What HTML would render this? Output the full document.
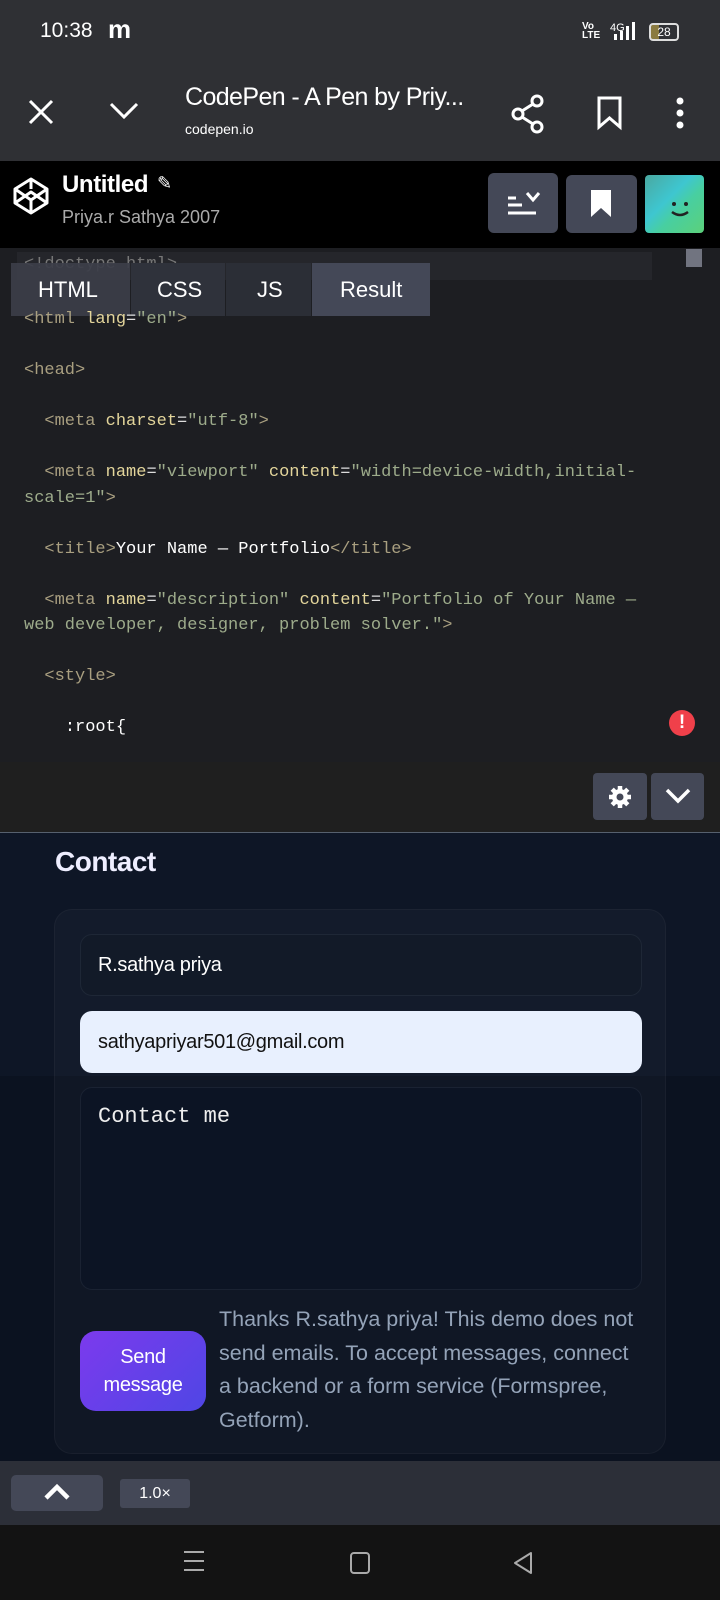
<!DOCTYPE html>
<html><head><meta charset="utf-8"><style>
*{margin:0;padding:0;box-sizing:border-box}
body{width:720px;height:1600px;overflow:hidden;background:#0b1220;font-family:"Liberation Sans",sans-serif;position:relative;color:#fff}
.a{position:absolute}
.mono{font-family:"Liberation Mono",monospace;font-size:17px;white-space:pre;color:#ddd}
.t{color:#a99f80}.n{color:#e3d59b}.v{color:#9dab8b}.w{color:#fff}
.btn{position:absolute;background:#444857;border-radius:4px}
</style></head><body>
<div class="a" style="left:0;top:0;width:720px;height:161px;background:#2f3034"></div>
<div class="a" style="left:40px;top:19px;font-size:21px">10:38</div>
<div class="a" style="left:108px;top:14px;font-size:26px;font-weight:bold">m</div>
<div class="a" style="left:582px;top:22px;font-size:10px;line-height:9px;font-weight:bold">Vo<br>LTE</div>
<div class="a" style="left:610px;top:22px;font-size:11px">4G</div>
<svg class="a" style="left:612px;top:20px" width="30" height="22"><rect x="2" y="14" width="3" height="6" fill="#fff"/><rect x="8" y="11" width="3" height="9" fill="#fff"/><rect x="14" y="6" width="3" height="14" fill="#fff"/><rect x="20" y="2" width="3" height="18" fill="#fff"/></svg>
<div class="a" style="left:649px;top:23px;width:30px;height:18px;border:2px solid #ddd;border-radius:4px;font-size:12px;text-align:center;line-height:14px;background:linear-gradient(90deg,#8a7a40 30%,transparent 30%)">28</div>
<svg class="a" style="left:26px;top:97px" width="30" height="30"><path d="M4 4L26 26M26 4L4 26" stroke="#fff" stroke-width="3"/></svg>
<svg class="a" style="left:108px;top:100px" width="32" height="22"><path d="M3 4L16 17L29 4" stroke="#fff" stroke-width="3" fill="none"/></svg>
<div class="a" style="left:185px;top:83px;font-size:25px;letter-spacing:-0.6px">CodePen - A Pen by Priy...</div>
<div class="a" style="left:185px;top:121px;font-size:14px">codepen.io</div>
<svg class="a" style="left:510px;top:94px" width="36" height="40"><circle cx="27" cy="7" r="5" stroke="#fff" stroke-width="3" fill="none"/><circle cx="8" cy="20" r="5" stroke="#fff" stroke-width="3" fill="none"/><circle cx="27" cy="33" r="5" stroke="#fff" stroke-width="3" fill="none"/><path d="M12 17L23 10M12 23L23 30" stroke="#fff" stroke-width="3"/></svg>
<svg class="a" style="left:596px;top:95px" width="28" height="36"><path d="M3 3H24V32L13.5 23L3 32Z" stroke="#fff" stroke-width="3" fill="none"/></svg>
<svg class="a" style="left:674px;top:96px" width="12" height="34"><circle cx="6" cy="5" r="3.5" fill="#fff"/><circle cx="6" cy="17" r="3.5" fill="#fff"/><circle cx="6" cy="29" r="3.5" fill="#fff"/></svg>
<div class="a" style="left:0;top:161px;width:720px;height:87px;background:#000"></div>
<svg class="a" style="left:12px;top:176px" width="38" height="40" viewBox="0 0 38 40"><g stroke="#fff" stroke-width="3" fill="none" stroke-linejoin="round"><path d="M19 3L35 13V27L19 37L3 27V13Z"/><path d="M19 3V13M3 13L19 24L35 13M19 37V24M3 27L19 16L35 27"/></g></svg>
<div class="a" style="left:62px;top:171px;font-size:24px;font-weight:bold;letter-spacing:-0.4px">Untitled</div>
<div class="a" style="left:157px;top:173px;font-size:18px">✎</div>
<div class="a" style="left:62px;top:207px;font-size:18px;color:#aaa">Priya.r Sathya 2007</div>
<div class="btn" style="left:488px;top:173px;width:70px;height:60px;border-radius:6px"></div>
<svg class="a" style="left:508px;top:190px" width="36" height="26"><path d="M0 8H8M0 15H14M0 23H28" stroke="#fff" stroke-width="3"/><path d="M19 3L25 10L31 3" stroke="#fff" stroke-width="3" fill="none"/></svg>
<div class="btn" style="left:566px;top:175px;width:71px;height:58px;border-radius:6px"></div>
<svg class="a" style="left:590px;top:189px" width="22" height="30"><path d="M1 1H21V28L11 19L1 28Z" fill="#fff"/></svg>
<div class="a" style="left:645px;top:175px;width:59px;height:58px;border-radius:4px;background:linear-gradient(135deg,#4aa8a0 0%,#3ec6d0 40%,#48cfa0 60%,#5cd07a 100%)"></div>
<svg class="a" style="left:668px;top:198px" width="26" height="24"><circle cx="6" cy="6" r="2" fill="#222"/><circle cx="18" cy="6" r="2" fill="#222"/><path d="M4 14Q12 20 20 14" stroke="#222" stroke-width="2.5" fill="none"/></svg>
<div class="a" style="left:0;top:248px;width:720px;height:584px;background:#1d1e22"></div>
<div class="a" style="left:17px;top:252px;width:635px;height:28px;background:#25262b"></div>
<div class="a" style="left:686px;top:249px;width:16px;height:18px;background:#717480"></div>
<div class="a mono" style="left:24px;top:255px"><span class="t" style="color:#777">&lt;!doctype html&gt;</span></div>
<div class="a" style="left:11px;top:263px;width:119px;height:53px;background:#3c3e49;opacity:.92"></div>
<div class="a" style="left:131px;top:263px;width:94px;height:53px;background:#2f323b"></div>
<div class="a" style="left:226px;top:263px;width:85px;height:53px;background:#2b2e36"></div>
<div class="a" style="left:312px;top:263px;width:118px;height:53px;background:#444857"></div>
<div class="a" style="left:38px;top:277px;font-size:22px">HTML</div>
<div class="a" style="left:157px;top:277px;font-size:22px">CSS</div>
<div class="a" style="left:257px;top:277px;font-size:22px">JS</div>
<div class="a" style="left:340px;top:277px;font-size:22px">Result</div>
<div class="a mono" style="left:24px;top:307px;line-height:25.5px"><span class="t">&lt;html</span> <span class="n">lang</span>=<span class="v">"en"</span><span class="t">&gt;</span>

<span class="t">&lt;head&gt;</span>

  <span class="t">&lt;meta</span> <span class="n">charset</span>=<span class="v">"utf-8"</span><span class="t">&gt;</span>

  <span class="t">&lt;meta</span> <span class="n">name</span>=<span class="v">"viewport"</span> <span class="n">content</span>=<span class="v">"width=device-width,initial-</span>
<span class="v">scale=1"</span><span class="t">&gt;</span>

  <span class="t">&lt;title&gt;</span><span class="w">Your Name — Portfolio</span><span class="t">&lt;/title&gt;</span>

  <span class="t">&lt;meta</span> <span class="n">name</span>=<span class="v">"description"</span> <span class="n">content</span>=<span class="v">"Portfolio of Your Name —</span>
<span class="v">web developer, designer, problem solver."</span><span class="t">&gt;</span>

  <span class="t">&lt;style&gt;</span>

    <span class="w">:root{</span></div>
<div class="a" style="left:669px;top:710px;width:26px;height:26px;border-radius:50%;background:#f0404a;text-align:center;font-weight:bold;font-size:19px;line-height:26px">!</div>
<div class="a" style="left:0;top:762px;width:720px;height:70px;background:#1f1f1f"></div>
<div class="btn" style="left:593px;top:773px;width:54px;height:47px"></div>
<svg class="a" style="left:608px;top:785px" width="24" height="24" viewBox="0 0 24 24"><g fill="#fff"><circle cx="12" cy="12" r="8"/><g stroke="#fff" stroke-width="4.5"><path d="M12 1V23M1 12H23M4.2 4.2L19.8 19.8M19.8 4.2L4.2 19.8"/></g></g><circle cx="12" cy="12" r="3.5" fill="#444857"/></svg>
<div class="btn" style="left:651px;top:773px;width:53px;height:47px"></div>
<svg class="a" style="left:664px;top:787px" width="28" height="18"><path d="M3 3L14 14L25 3" stroke="#fff" stroke-width="3.5" fill="none"/></svg>
<div class="a" style="left:0;top:832px;width:720px;height:1px;background:#56606e"></div>
<div class="a" style="left:0;top:833px;width:720px;height:243px;background:#0e1626"></div>
<div class="a" style="left:55px;top:846px;font-size:28px;font-weight:bold;color:#eef;letter-spacing:-0.5px">Contact</div>
<div class="a" style="left:54px;top:909px;width:612px;height:545px;border-radius:18px;background:rgba(255,255,255,.025);border:1px solid rgba(255,255,255,.04)"></div>
<div class="a" style="left:80px;top:934px;width:562px;height:62px;border-radius:12px;border:1px solid #1e2736;background:#121a28"></div>
<div class="a" style="left:98px;top:954px;font-size:20px;letter-spacing:-0.3px">R.sathya priya</div>
<div class="a" style="left:80px;top:1011px;width:562px;height:62px;border-radius:12px;background:#e8f0fe"></div>
<div class="a" style="left:98px;top:1031px;font-size:20px;color:#111;letter-spacing:-0.3px">sathyapriyar501@gmail.com</div>
<div class="a" style="left:80px;top:1087px;width:562px;height:203px;border-radius:12px;border:1px solid #1a2232;background:#0c1424"></div>
<div class="a" style="left:98px;top:1104px;font-family:'Liberation Mono',monospace;font-size:22px;color:#eee">Contact me</div>
<div class="a" style="left:80px;top:1331px;width:126px;height:80px;border-radius:16px;background:linear-gradient(135deg,#7c3aed,#4f46e5);text-align:center;font-size:20px;line-height:28px;padding-top:12px;letter-spacing:-0.3px">Send<br>message</div>
<div class="a" style="left:219px;top:1303px;font-size:21.5px;line-height:33.5px;color:#94a3b8;white-space:nowrap;letter-spacing:0px">Thanks R.sathya priya! This demo does not<br>send emails. To accept messages, connect<br>a backend or a form service (Formspree,<br>Getform).</div>
<div class="a" style="left:0;top:1461px;width:720px;height:64px;background:#2c2f38"></div>
<div class="btn" style="left:11px;top:1475px;width:92px;height:36px;border-radius:5px"></div>
<svg class="a" style="left:43px;top:1482px" width="28" height="20"><path d="M3 16L14 5L25 16" stroke="#fff" stroke-width="4.5" fill="none"/></svg>
<div class="btn" style="left:120px;top:1479px;width:70px;height:29px;border-radius:3px;font-size:16px;text-align:center;line-height:29px">1.0×</div>
<div class="a" style="left:0;top:1525px;width:720px;height:75px;background:#131313"></div>
<svg class="a" style="left:182px;top:1549px" width="24" height="24"><path d="M2 3H22M2 12H22M2 21H22" stroke="#aaa" stroke-width="2"/></svg>
<div class="a" style="left:350px;top:1552px;width:20px;height:22px;border:2px solid #aaa;border-radius:4px"></div>
<svg class="a" style="left:512px;top:1551px" width="22" height="24"><path d="M19 2L3 12L19 22Z" stroke="#aaa" stroke-width="2" fill="none" stroke-linejoin="round"/></svg>
</body></html>
